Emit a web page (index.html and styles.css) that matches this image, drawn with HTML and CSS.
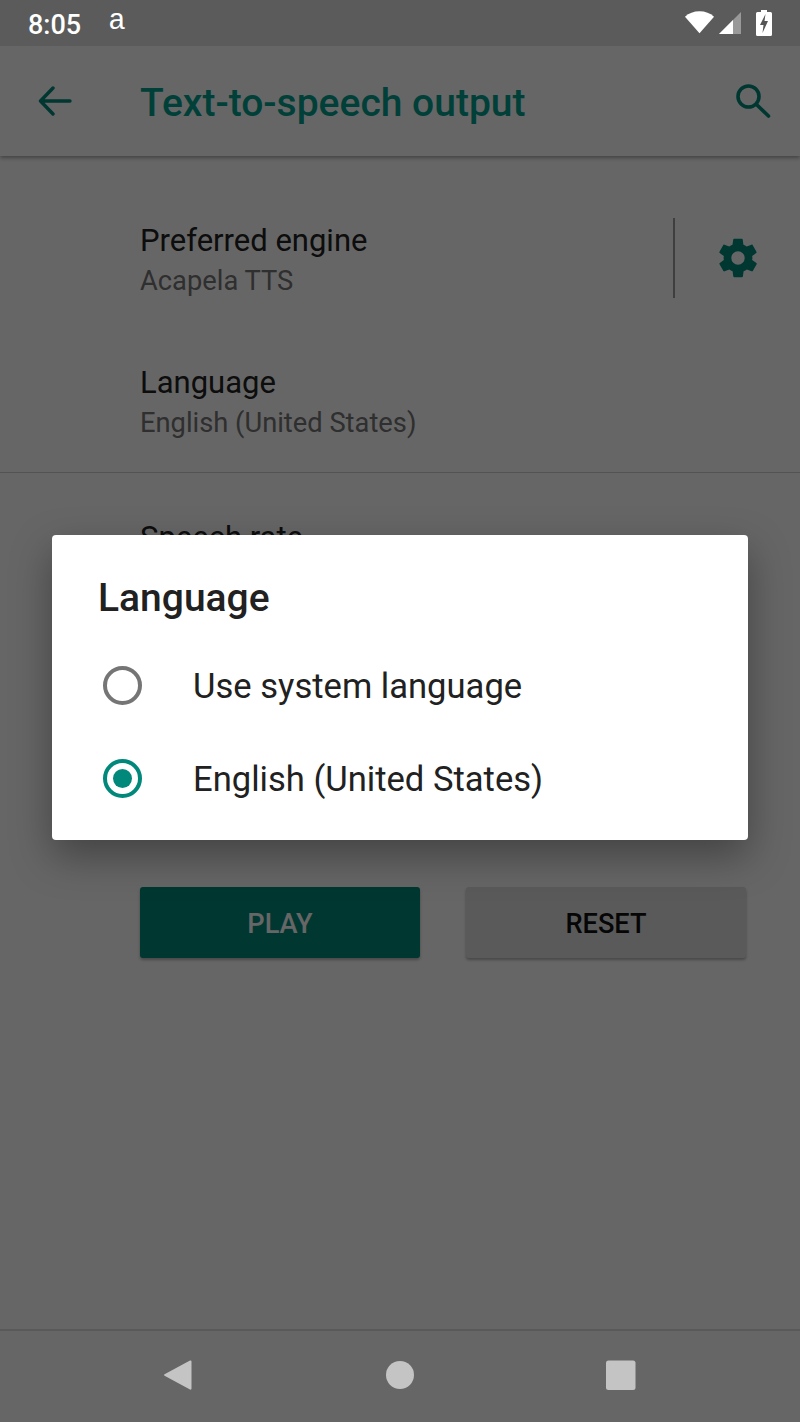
FILE: index.html
```html
<!DOCTYPE html>
<html lang="en">
<head>
  <meta charset="UTF-8" />
  <meta name="viewport" content="width=device-width, initial-scale=1.0"/>
  <title>Text-to-speech output</title>
  <link rel="stylesheet" href="styles.css">
</head>
<body>

  <div class="phone">

    <div class="status-bar">
      <div class="status-left">
        <span class="clock">8:05</span>
        <span class="status-a">a</span>
      </div>
      <div class="status-icons">
        <svg class="ic-wifi" viewBox="0 0 32 24"><path d="M16 23.500 1 6.500C5 3 10 1 16 1s11 2 15 5.500z" fill="#fff"/></svg>
        <svg class="ic-signal" viewBox="0 0 24 24"><path d="M1 23 23 1v22z" fill="#999"/><path d="M1 23 15 9v14z" fill="#fff"/></svg>
        <svg class="ic-battery" viewBox="0 0 16 26"><path d="M5 0h6v2h3.500q1.500 0 1.500 1.500v21q0 1.500-1.500 1.500h-13Q0 26 0 24.500v-21Q0 2 1.500 2H5z" fill="#fff"/><path d="M9.500 4 4 15h3.500l-1 8L12 11H8.500z" fill="#555"/></svg>
      </div>
    </div>

    <div class="app-bar">
      <svg class="ic-back" viewBox="0 0 34 30"><path d="M32 15H3M15 2 2.500 15 15 28" fill="none" stroke="#00897b" stroke-width="3.400" stroke-linecap="round" stroke-linejoin="round"/></svg>
      <h1 class="app-title">Text-to-speech output</h1>
      <svg class="ic-search" viewBox="0 0 36 36"><circle cx="13.500" cy="13.500" r="10.500" fill="none" stroke="#00897b" stroke-width="3.600"/><path d="M21.500 21.500 33.500 33" fill="none" stroke="#00897b" stroke-width="3.600" stroke-linecap="round"/></svg>
    </div>

    <div class="settings">
      <div class="pref-row engine-row">
        <div class="pref-text">
          <div class="pref-title">Preferred engine</div>
          <div class="pref-sub">Acapela TTS</div>
        </div>
        <div class="pref-divider"></div>
        <svg class="ic-gear" viewBox="0 0 24 24"><path fill-rule="evenodd" fill="#00897b" d="M19.400 13c.04-.32.1-.66.1-1s-.06-.68-.1-1l2.100-1.650c.2-.15.25-.42.13-.64l-2-3.460c-.12-.22-.4-.3-.6-.22l-2.500 1c-.52-.4-1.080-.73-1.700-.98l-.37-2.650A.506.506 0 0 0 14 2h-4c-.25 0-.46.18-.5.42l-.37 2.650c-.62.25-1.180.58-1.700.98l-2.500-1c-.22-.08-.48 0-.6.220l-2 3.460c-.13.220-.07.490.12.640L4.600 11c-.04.320-.1.660-.1 1s.06.680.1 1l-2.100 1.650c-.2.150-.25.420-.12.640l2 3.460c.12.220.38.300.6.220l2.500-1c.52.400 1.080.730 1.700.980l.37 2.650c.04.240.25.420.5.420h4c.25 0 .46-.18.5-.42l.37-2.650c.62-.25 1.180-.58 1.700-.98l2.500 1c.22.080.48 0 .6-.22l2-3.460c.12-.22.07-.49-.13-.64zM12 15.500a3.500 3.500 0 1 1 0-7 3.500 3.500 0 0 1 0 7z"/></svg>
      </div>
      <div class="pref-row lang-row">
        <div class="pref-text">
          <div class="pref-title">Language</div>
          <div class="pref-sub">English (United States)</div>
        </div>
      </div>
      <div class="rule"></div>
      <div class="sliders">
        <div class="pref-title">Speech rate</div>
      </div>
      <div class="button-row">
        <div class="btn btn-play">PLAY</div>
        <div class="btn btn-reset">RESET</div>
      </div>
    </div>

    <div class="nav-bar">
      <svg class="ic-nav" viewBox="0 0 30 32"><path d="M27 1.500q1.500-.5 1.500 1v27q0 1.500-1.500 1L2 17q-2-1-0-2z" fill="#c4c4c4"/></svg>
      <svg class="ic-nav" viewBox="0 0 30 32"><circle cx="15" cy="16" r="14" fill="#c4c4c4"/></svg>
      <svg class="ic-nav" viewBox="0 0 30 32"><rect x="0" y="1.500" width="29.500" height="29.500" rx="2.500" fill="#c4c4c4"/></svg>
    </div>

    <div class="scrim"></div>

    <div class="dialog">
      <h2 class="dialog-title">Language</h2>
      <div class="option">
        <span class="radio"></span>
        <span class="option-label">Use system language</span>
      </div>
      <div class="option">
        <span class="radio radio-on"></span>
        <span class="option-label">English (United States)</span>
      </div>
    </div>

  </div>

</body>
</html>
```

FILE: styles.css
```css
* {
  box-sizing: border-box;
}

html, body {
  margin: 0;
  padding: 0;
}

body {
  background-color: #fff;
  font-family: Roboto, sans-serif;
}

.phone {
  position: relative;
  width: 800px;
  height: 1422px;
  display: flex;
  flex-direction: column;
  overflow: hidden;
  background-color: #fff;
}

/* status bar stays above the scrim */
.status-bar {
  position: relative;
  z-index: 3;
  height: 46px;
  flex-shrink: 0;
  background-color: #5b5b5b;
  color: #fff;
  display: flex;
  justify-content: space-between;
  align-items: center;
  padding: 0 28px 0 28px;
}

.status-left {
  display: flex;
  align-items: center;
  gap: 27px;
}

.clock {
  font-size: 27px;
  font-weight: 500;
  line-height: 46px;
  margin-top: 3px;
}

.status-a {
  font-family: "Liberation Mono", monospace;
  font-size: 29px;
  line-height: 46px;
  margin-top: -3px;
}

.status-icons {
  display: flex;
  align-items: center;
}

.ic-wifi {
  width: 31px;
  height: 24px;
  margin-right: 3px;
  margin-top: -2px;
}

.ic-signal {
  width: 24px;
  height: 24px;
  margin-right: 14px;
  margin-top: -1px;
}

.ic-battery {
  width: 16px;
  height: 26px;
  margin-top: -1px;
}

.app-bar {
  height: 110px;
  flex-shrink: 0;
  display: flex;
  align-items: center;
  padding: 0 29px 0 38px;
  background-color: #fff;
  box-shadow: 0 2px 4px rgba(0, 0, 0, 0.35);
}

.ic-back {
  width: 34px;
  height: 30px;
  margin-right: 68px;
}

.app-title {
  flex: 1;
  margin: 4px 0 0;
  font-size: 39px;
  font-weight: 500;
  color: #00a08f;
}

.ic-search {
  width: 36px;
  height: 36px;
}

.settings {
  flex: 1;
  display: flex;
  flex-direction: column;
  padding-top: 31px;
}

.pref-row {
  display: flex;
  align-items: center;
  padding-left: 140px;
}

.engine-row {
  height: 142px;
  padding-right: 39px;
}

.lang-row {
  height: 143px;
}

.pref-text {
  flex: 1;
  padding-top: 4px;
}

.engine-row .pref-text {
  padding-top: 6px;
}

.pref-title {
  font-size: 31px;
  line-height: 40px;
  color: #212121;
}

.pref-sub {
  font-size: 27.300px;
  line-height: 40px;
  color: #757575;
}

.pref-divider {
  width: 2px;
  height: 80px;
  background-color: #9e9e9e;
  margin-right: 40px;
}

.ic-gear {
  width: 46px;
  height: 46px;
}

.rule {
  height: 1px;
  background-color: #d0d0d0;
}

.sliders {
  height: 414px;
  padding: 45px 0 0 140px;
}

.button-row {
  display: flex;
  gap: 46px;
  padding: 0 54px 0 140px;
}

.btn {
  width: 280px;
  height: 71px;
  padding-top: 2px;
  border-radius: 3px;
  display: flex;
  align-items: center;
  justify-content: center;
  font-size: 27.200px;
  font-weight: 500;
  box-shadow: 0 2px 3px rgba(0, 0, 0, 0.3);
}

.btn-play {
  background-color: #00897b;
  color: #fff;
}

.btn-reset {
  background-color: #e0e0e0;
  color: #111;
}

.nav-bar {
  position: relative;
  z-index: 3;
  height: 93px;
  flex-shrink: 0;
  display: flex;
  justify-content: center;
  align-items: center;
  gap: 192px;
  padding: 0 1px 3px 0;
  background-color: #666;
  border-top: 2px solid #595959;
}

.ic-nav {
  width: 30px;
  height: 32px;
}

.ic-nav:last-child {
  margin-left: -1px;
}

.scrim {
  position: absolute;
  inset: 0;
  z-index: 1;
  background-color: rgba(0, 0, 0, 0.6);
}

.dialog {
  position: absolute;
  z-index: 2;
  left: 52px;
  top: 535px;
  width: 696px;
  height: 305px;
  padding: 40px 0 0 47px;
  background-color: #fff;
  border-radius: 4px;
  box-shadow: 0 16px 40px rgba(0, 0, 0, 0.35);
}

.dialog-title {
  margin: 0 0 18px -1px;
  font-size: 39px;
  font-weight: 500;
  line-height: 46px;
  color: #212121;
}

.option {
  height: 93px;
  display: flex;
  align-items: center;
  gap: 51px;
}

.radio {
  width: 39px;
  height: 39px;
  margin-left: 4px;
  border-radius: 50%;
  border: 4px solid #757575;
  display: flex;
  align-items: center;
  justify-content: center;
}

.radio-on {
  border-color: #00897b;
}

.radio-on::after {
  content: "";
  width: 19px;
  height: 19px;
  border-radius: 50%;
  background-color: #00897b;
}

.option-label {
  font-size: 34.600px;
  color: #212121;
}
```
